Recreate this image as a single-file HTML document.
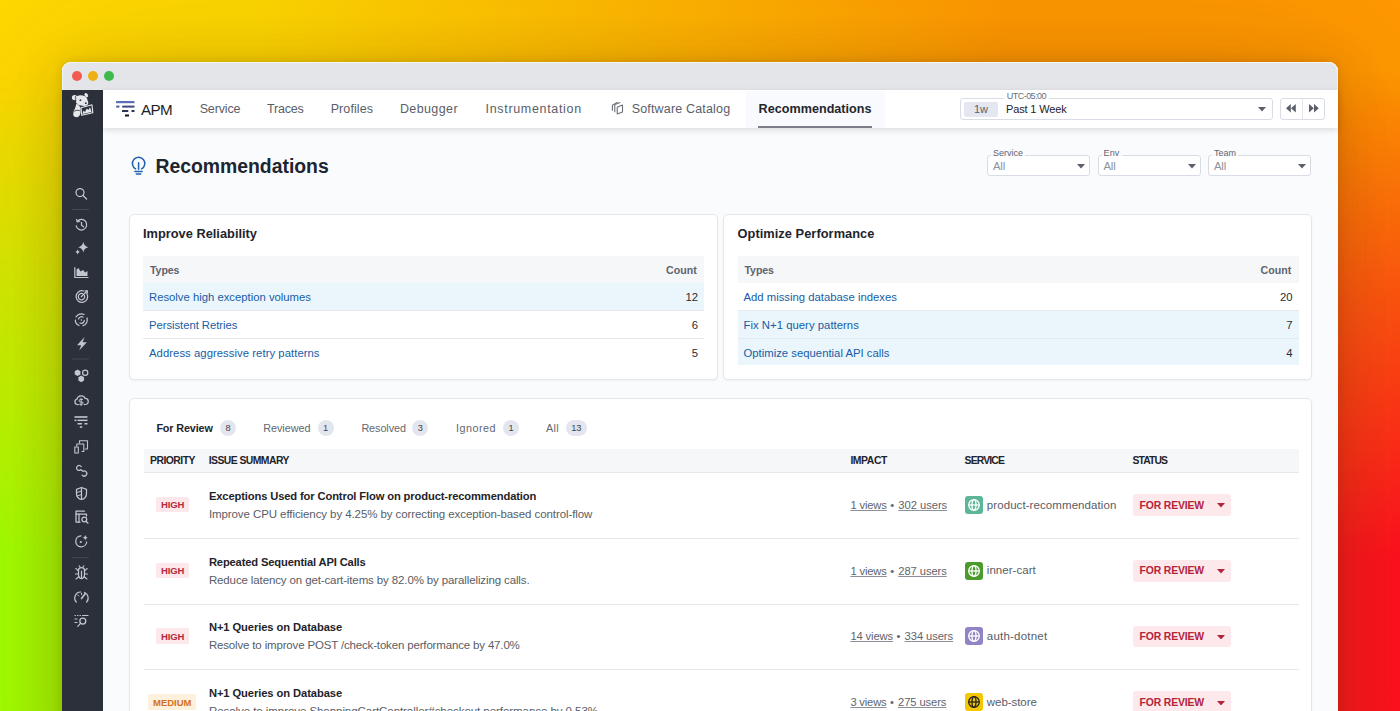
<!DOCTYPE html>
<html><head><meta charset="utf-8"><style>
html,body{margin:0;padding:0;width:1400px;height:711px;overflow:hidden;}
body{position:relative;font-family:"Liberation Sans", sans-serif;background:#ffb000;}
.bg{position:absolute;left:0;top:0;width:1400px;height:711px;background:linear-gradient(to right,#ffd800 18%,#ff9800 72%);}
.bg2{position:absolute;left:0;top:0;width:1400px;height:711px;background:linear-gradient(to right,#a2ff00,#ff101e);-webkit-mask-image:linear-gradient(to bottom,transparent 10%,rgba(0,0,0,.5) 42%,#000 78%);mask-image:linear-gradient(to bottom,transparent 10%,rgba(0,0,0,.5) 42%,#000 78%);}
.a{position:absolute;}
.t{position:absolute;white-space:nowrap;line-height:1;}
.c{text-align:center;}
u{text-decoration:underline;text-underline-offset:1px;text-decoration-thickness:1px;text-decoration-color:#8c9098;}
</style></head><body>
<div class="bg"></div><div class="bg2"></div>
<div class="a" style="left:62px;top:62px;width:1276px;height:800px;background:#fafbfd;border-radius:9px 9px 0 0;box-shadow:0 0 160px rgba(60,30,0,0.14),0 6px 50px rgba(70,40,0,0.18),0 0 10px rgba(60,40,0,0.14);"></div>
<div class="a" style="left:62px;top:62px;width:1276px;height:28px;background:#e4e5e9;border-radius:9px 9px 0 0;box-shadow:inset 0 1px 0 rgba(255,255,255,0.6),inset 1px 0 0 rgba(255,255,255,0.5),inset -1px 0 0 rgba(255,255,255,0.5);"></div>
<div class="a" style="left:71.5px;top:71px;width:10px;height:10px;background:#f25a52;border-radius:50%;"></div>
<div class="a" style="left:87.5px;top:71px;width:10px;height:10px;background:#f0b012;border-radius:50%;"></div>
<div class="a" style="left:103.5px;top:71px;width:10px;height:10px;background:#3fba4c;border-radius:50%;"></div>
<div class="a" style="left:62px;top:90px;width:41px;height:700px;background:#2c303a;"></div>
<div class="a" style="left:103px;top:90px;width:1235px;height:37.5px;background:#ffffff;box-shadow:0 2px 6px rgba(0,0,0,0.13);"></div>
<div class="a" style="left:746px;top:91px;width:139px;height:36.5px;background:#f9fafd;"></div>
<div class="a" style="left:758px;top:126.3px;width:114px;height:1.8px;background:#7b7e88;"></div>
<div class="t" style="left:141px;top:101.93px;font-size:15.2px;font-weight:400;color:#1d1f24;letter-spacing:-0.647px;">APM</div>
<div class="t" style="left:199.7px;top:102.82px;font-size:12.5px;font-weight:400;color:#5a5e68;letter-spacing:-0.155px;">Service</div>
<div class="t" style="left:267px;top:102.82px;font-size:12.5px;font-weight:400;color:#5a5e68;letter-spacing:-0.190px;">Traces</div>
<div class="t" style="left:330.7px;top:102.82px;font-size:12.5px;font-weight:400;color:#5a5e68;letter-spacing:0.090px;">Profiles</div>
<div class="t" style="left:399.9px;top:102.82px;font-size:12.5px;font-weight:400;color:#5a5e68;letter-spacing:0.400px;">Debugger</div>
<div class="t" style="left:485.6px;top:102.82px;font-size:12.5px;font-weight:400;color:#5a5e68;letter-spacing:0.669px;">Instrumentation</div>
<div class="t" style="left:631.7px;top:102.82px;font-size:12.5px;font-weight:400;color:#5a5e68;letter-spacing:0.169px;">Software Catalog</div>
<div class="t" style="left:758.6px;top:102.73px;font-size:12.6px;font-weight:700;color:#23262d;letter-spacing:0.018px;">Recommendations</div>
<svg class="a" style="left:114px;top:99px" width="22" height="20" viewBox="0 0 22 20">
<rect x="2" y="2" width="18.5" height="2.2" fill="#5b70b8"/>
<rect x="2.2" y="6.6" width="3.2" height="2" fill="#4a5a9a"/><rect x="8.2" y="6.6" width="12.3" height="2" fill="#3c4a80"/>
<rect x="8" y="11" width="6.3" height="2" fill="#2e3552"/><rect x="17.5" y="11" width="3" height="2" fill="#2e3552"/>
<rect x="11" y="15.5" width="4" height="2" fill="#15171c"/>
</svg>
<svg class="a" style="left:606px;top:96px" width="24" height="24" viewBox="0 0 24 24" fill="none" stroke="#6b7078" stroke-width="1.1" stroke-linejoin="round">
<path d="M11.2 11.2 L16.5 9.1 L16.5 15.9 L11.2 17.9 Z"/>
<path d="M8.8 16.2 L8.8 8.6 L14.3 6.6"/>
<path d="M6.4 14.8 L6.4 9.2 L11.6 6.1"/>
</svg>
<div class="a" style="left:960px;top:97.5px;width:312.5px;height:22.5px;border:1px solid #d9dce5;border-radius:3px;background:#fff;box-sizing:border-box;"></div>
<div class="a" style="left:1003.5px;top:92px;width:45px;height:8px;background:#fff;"></div>
<div class="t" style="left:1006.8px;top:92.08px;font-size:9.0px;font-weight:400;color:#6a6f7a;letter-spacing:-0.535px;">UTC-05:00</div>
<div class="a" style="left:964px;top:101.5px;width:33.5px;height:15px;background:#e4e7ef;border-radius:2px;"></div>
<div class="t" style="left:974px;top:103.59px;font-size:11.0px;font-weight:400;color:#5a5f6a;letter-spacing:-0.031px;">1w</div>
<div class="t" style="left:1006px;top:103.59px;font-size:11.0px;font-weight:400;color:#1f2228;letter-spacing:-0.142px;">Past 1 Week</div>
<svg class="a" style="left:1258px;top:107.3px" width="8" height="4.5" viewBox="0 0 8 4.5"><path d="M0 0 L8 0 L4 4.5Z" fill="#5a5f6a"/></svg>
<div class="a" style="left:1279.5px;top:97.5px;width:45px;height:22.5px;border:1px solid #d9dce5;border-radius:3px;background:#fff;box-sizing:border-box;"></div>
<div class="a" style="left:1302px;top:98px;width:1px;height:21.5px;background:#e1e4ec;"></div>
<svg class="a" style="left:1285.5px;top:104.3px" width="10" height="8.5" viewBox="0 0 10 8.5"><path d="M4.8 0 L0 4.25 L4.8 8.5Z M9.8 0 L5 4.25 L9.8 8.5Z" fill="#5a5f6a"/></svg>
<svg class="a" style="left:1308.5px;top:104.3px" width="10" height="8.5" viewBox="0 0 10 8.5"><path d="M0 0 L4.8 4.25 L0 8.5Z M5 0 L9.8 4.25 L5 8.5Z" fill="#5a5f6a"/></svg>
<div class="t" style="left:155.4px;top:156.58px;font-size:19.4px;font-weight:700;color:#1c2530;letter-spacing:-0.011px;">Recommendations</div>
<svg class="a" style="left:131px;top:156px" width="16" height="20" viewBox="0 0 16 20" fill="none" stroke="#1f5fae" stroke-width="1.5" stroke-linecap="round">
<path d="M4.6 12.9 A6.2 6.2 0 1 1 10.6 12.9"/>
<path d="M7.6 6.8 L7.6 13.2"/><path d="M3.9 15.6 L11.1 15.6"/><path d="M5.4 17.9 L9.7 17.9"/>
</svg>
<div class="a" style="left:987px;top:154.5px;width:103px;height:21.5px;border:1px solid #d9dce5;border-radius:3px;background:#fff;box-sizing:border-box;"></div>
<div class="a" style="left:991px;top:150px;width:34px;height:6px;background:#fafbfd;"></div>
<div class="t" style="left:993px;top:148.78px;font-size:9.0px;font-weight:400;color:#5f6470;letter-spacing:-0.002px;">Service</div>
<div class="t" style="left:993px;top:160.83px;font-size:11.3px;font-weight:400;color:#8d929c;letter-spacing:-0.186px;">All</div>
<svg class="a" style="left:1077px;top:164px" width="8" height="4.5" viewBox="0 0 8 4.5"><path d="M0 0 L8 0 L4 4.5Z" fill="#5a5f6a"/></svg>
<div class="a" style="left:1097.5px;top:154.5px;width:103px;height:21.5px;border:1px solid #d9dce5;border-radius:3px;background:#fff;box-sizing:border-box;"></div>
<div class="a" style="left:1101.5px;top:150px;width:20px;height:6px;background:#fafbfd;"></div>
<div class="t" style="left:1103.5px;top:148.78px;font-size:9.0px;font-weight:400;color:#5f6470;letter-spacing:0.164px;">Env</div>
<div class="t" style="left:1103.5px;top:160.83px;font-size:11.3px;font-weight:400;color:#8d929c;letter-spacing:-0.186px;">All</div>
<svg class="a" style="left:1187.5px;top:164px" width="8" height="4.5" viewBox="0 0 8 4.5"><path d="M0 0 L8 0 L4 4.5Z" fill="#5a5f6a"/></svg>
<div class="a" style="left:1208px;top:154.5px;width:103px;height:21.5px;border:1px solid #d9dce5;border-radius:3px;background:#fff;box-sizing:border-box;"></div>
<div class="a" style="left:1212px;top:150px;width:26px;height:6px;background:#fafbfd;"></div>
<div class="t" style="left:1214px;top:148.78px;font-size:9.0px;font-weight:400;color:#5f6470;letter-spacing:-0.002px;">Team</div>
<div class="t" style="left:1214px;top:160.83px;font-size:11.3px;font-weight:400;color:#8d929c;letter-spacing:-0.186px;">All</div>
<svg class="a" style="left:1298px;top:164px" width="8" height="4.5" viewBox="0 0 8 4.5"><path d="M0 0 L8 0 L4 4.5Z" fill="#5a5f6a"/></svg>
<div class="a" style="left:128.5px;top:213.5px;width:589.5px;height:166.5px;background:#fff;border:1px solid #e6e7ec;border-radius:5px;box-sizing:border-box;box-shadow:0 1px 2px rgba(0,0,0,0.05);"></div>
<div class="a" style="left:722.5px;top:213.5px;width:589px;height:166.5px;background:#fff;border:1px solid #e6e7ec;border-radius:5px;box-sizing:border-box;box-shadow:0 1px 2px rgba(0,0,0,0.05);"></div>
<div class="a" style="left:128.5px;top:397.5px;width:1183px;height:400px;background:#fff;border:1px solid #e6e7ec;border-radius:5px;box-sizing:border-box;box-shadow:0 1px 2px rgba(0,0,0,0.05);"></div>
<div class="t" style="left:143px;top:227.86px;font-size:12.8px;font-weight:700;color:#1f232a;letter-spacing:0.010px;">Improve Reliability</div>
<div class="a" style="left:143px;top:256px;width:561px;height:27px;background:#f6f7f9;"></div>
<div class="t" style="left:150px;top:265.03px;font-size:10.6px;font-weight:700;color:#5f646d;letter-spacing:-0.090px;">Types</div>
<div class="t" style="right:703px;top:265.03px;font-size:10.6px;font-weight:700;color:#5f646d;letter-spacing:0.1px;">Count</div>
<div class="a" style="left:143px;top:283px;width:561px;height:27.5px;background:#eaf6fc;"></div>
<div class="t" style="left:149px;top:292.23px;font-size:11.3px;font-weight:400;color:#175da6;letter-spacing:-0.002px;">Resolve high exception volumes</div>
<div class="t" style="right:702px;top:292.23px;font-size:11.3px;font-weight:400;color:#2a2d33;">12</div>
<div class="a" style="left:143px;top:310.0px;width:561px;height:1px;background:#e6e8ee;"></div>
<div class="t" style="left:149px;top:319.73px;font-size:11.3px;font-weight:400;color:#175da6;letter-spacing:-0.049px;">Persistent Retries</div>
<div class="t" style="right:702px;top:319.73px;font-size:11.3px;font-weight:400;color:#2a2d33;">6</div>
<div class="a" style="left:143px;top:338.0px;width:561px;height:1px;background:#e6e8ee;"></div>
<div class="t" style="left:149px;top:347.73px;font-size:11.3px;font-weight:400;color:#175da6;letter-spacing:0.050px;">Address aggressive retry patterns</div>
<div class="t" style="right:702px;top:347.73px;font-size:11.3px;font-weight:400;color:#2a2d33;">5</div>
<div class="t" style="left:737.5px;top:227.86px;font-size:12.8px;font-weight:700;color:#1f232a;letter-spacing:0.057px;">Optimize Performance</div>
<div class="a" style="left:737.5px;top:256px;width:561.0px;height:27px;background:#f6f7f9;"></div>
<div class="t" style="left:744.5px;top:265.03px;font-size:10.6px;font-weight:700;color:#5f646d;letter-spacing:-0.090px;">Types</div>
<div class="t" style="right:108.5px;top:265.03px;font-size:10.6px;font-weight:700;color:#5f646d;letter-spacing:0.1px;">Count</div>
<div class="t" style="left:743.5px;top:292.23px;font-size:11.3px;font-weight:400;color:#175da6;letter-spacing:0.004px;">Add missing database indexes</div>
<div class="t" style="right:107.5px;top:292.23px;font-size:11.3px;font-weight:400;color:#2a2d33;">20</div>
<div class="a" style="left:737.5px;top:310.5px;width:561.0px;height:27.5px;background:#eaf6fc;"></div>
<div class="a" style="left:737.5px;top:310.0px;width:561.0px;height:1px;background:#e6e8ee;"></div>
<div class="t" style="left:743.5px;top:319.73px;font-size:11.3px;font-weight:400;color:#175da6;letter-spacing:0.035px;">Fix N+1 query patterns</div>
<div class="t" style="right:107.5px;top:319.73px;font-size:11.3px;font-weight:400;color:#2a2d33;">7</div>
<div class="a" style="left:737.5px;top:338.5px;width:561.0px;height:26.5px;background:#eaf6fc;"></div>
<div class="a" style="left:737.5px;top:338.0px;width:561.0px;height:1px;background:#e6e8ee;"></div>
<div class="t" style="left:743.5px;top:347.73px;font-size:11.3px;font-weight:400;color:#175da6;letter-spacing:0.010px;">Optimize sequential API calls</div>
<div class="t" style="right:107.5px;top:347.73px;font-size:11.3px;font-weight:400;color:#2a2d33;">4</div>
<div class="t" style="left:156.4px;top:422.76px;font-size:10.8px;font-weight:700;color:#1f232a;letter-spacing:-0.132px;">For Review</div>
<div class="a" style="left:220px;top:419.5px;width:16px;height:16px;background:#e4e6ef;border-radius:8px;"></div>
<div class="a c" style="left:220px;top:419.5px;width:16px;height:16px;line-height:16.5px;font-size:9.3px;color:#3e434c;">8</div>
<div class="t" style="left:263.3px;top:422.76px;font-size:10.8px;font-weight:400;color:#62676f;letter-spacing:-0.041px;">Reviewed</div>
<div class="a" style="left:317.5px;top:419.5px;width:16px;height:16px;background:#e4e6ef;border-radius:8px;"></div>
<div class="a c" style="left:317.5px;top:419.5px;width:16px;height:16px;line-height:16.5px;font-size:9.3px;color:#3e434c;">1</div>
<div class="t" style="left:361.4px;top:422.76px;font-size:10.8px;font-weight:400;color:#62676f;letter-spacing:-0.066px;">Resolved</div>
<div class="a" style="left:412.4px;top:419.5px;width:16px;height:16px;background:#e4e6ef;border-radius:8px;"></div>
<div class="a c" style="left:412.4px;top:419.5px;width:16px;height:16px;line-height:16.5px;font-size:9.3px;color:#3e434c;">3</div>
<div class="t" style="left:456px;top:422.76px;font-size:10.8px;font-weight:400;color:#62676f;letter-spacing:0.481px;">Ignored</div>
<div class="a" style="left:503px;top:419.5px;width:16px;height:16px;background:#e4e6ef;border-radius:8px;"></div>
<div class="a c" style="left:503px;top:419.5px;width:16px;height:16px;line-height:16.5px;font-size:9.3px;color:#3e434c;">1</div>
<div class="t" style="left:546px;top:422.76px;font-size:10.8px;font-weight:400;color:#62676f;letter-spacing:0.266px;">All</div>
<div class="a" style="left:565.6px;top:419.5px;width:21.5px;height:16px;background:#e4e6ef;border-radius:8px;"></div>
<div class="a c" style="left:565.6px;top:419.5px;width:21.5px;height:16px;line-height:16.5px;font-size:9.3px;color:#3e434c;">13</div>
<div class="a" style="left:143.5px;top:449px;width:1155px;height:23.5px;background:#f6f7f9;border-bottom:1px solid #e6e8ee;box-sizing:border-box;"></div>
<div class="t" style="left:150.1px;top:456.20px;font-size:10.4px;font-weight:700;color:#1f232a;letter-spacing:-0.540px;">PRIORITY</div>
<div class="t" style="left:208.8px;top:456.20px;font-size:10.4px;font-weight:700;color:#1f232a;letter-spacing:-0.565px;">ISSUE SUMMARY</div>
<div class="t" style="left:850.4px;top:456.20px;font-size:10.4px;font-weight:700;color:#1f232a;letter-spacing:-0.415px;">IMPACT</div>
<div class="t" style="left:964.6px;top:456.20px;font-size:10.4px;font-weight:700;color:#1f232a;letter-spacing:-0.867px;">SERVICE</div>
<div class="t" style="left:1132.5px;top:456.20px;font-size:10.4px;font-weight:700;color:#1f232a;letter-spacing:-0.926px;">STATUS</div>
<div class="a" style="left:156.4px;top:496.8px;width:32.5px;height:15.5px;background:#fce7ea;border-radius:2px;"></div>
<div class="t" style="left:161px;top:500.36px;font-size:9.5px;font-weight:700;color:#b52a3d;letter-spacing:-0.138px;">HIGH</div>
<div class="t" style="left:208.9px;top:490.82px;font-size:11.2px;font-weight:700;color:#1f232a;letter-spacing:-0.133px;">Exceptions Used for Control Flow on product-recommendation</div>
<div class="t" style="left:208.9px;top:508.97px;font-size:11.5px;font-weight:400;color:#585d66;letter-spacing:-0.085px;">Improve CPU efficiency by 4.25% by correcting exception-based control-flow</div>
<div class="t" style="left:850.4px;top:499.92px;font-size:11.2px;font-weight:400;color:#5f646d;letter-spacing:-0.135px;"><u>1 views</u></div>
<div class="t" style="left:890.3px;top:499.92px;font-size:11.2px;font-weight:400;color:#5f646d;">•</div>
<div class="t" style="left:898.3px;top:499.92px;font-size:11.2px;font-weight:400;color:#5f646d;letter-spacing:-0.032px;"><u>302 users</u></div>
<div class="a" style="left:964.6px;top:495.8px;width:18px;height:18px;background:#5cb697;border-radius:3px;"></div>
<svg class="a" style="left:966.6px;top:497.8px" width="14" height="14" viewBox="0 0 14 14" fill="none" stroke="#fff" stroke-width="1.3">
<circle cx="7" cy="7" r="5.3"/><ellipse cx="7" cy="7" rx="2" ry="5.3"/><path d="M1.8 7 L12.2 7"/></svg>
<div class="t" style="left:986.8px;top:499.67px;font-size:11.5px;font-weight:400;color:#585d66;letter-spacing:0.080px;">product-recommendation</div>
<div class="a" style="left:1132.5px;top:494.1px;width:98.5px;height:21.7px;background:#fde8eb;border-radius:3px;"></div>
<div class="t" style="left:1139.6px;top:500.60px;font-size:10.4px;font-weight:700;color:#b3243b;letter-spacing:-0.147px;">FOR REVIEW</div>
<svg class="a" style="left:1216.5px;top:503.3px" width="8" height="4.5" viewBox="0 0 8 4.5"><path d="M0 0 L8 0 L4 4.5Z" fill="#b3243b"/></svg>
<div class="a" style="left:144px;top:537.75px;width:1154.5px;height:1px;background:#e6e8ee;"></div>
<div class="a" style="left:156.4px;top:562.55px;width:32.5px;height:15.5px;background:#fce7ea;border-radius:2px;"></div>
<div class="t" style="left:161px;top:566.11px;font-size:9.5px;font-weight:700;color:#b52a3d;letter-spacing:-0.138px;">HIGH</div>
<div class="t" style="left:208.9px;top:556.57px;font-size:11.2px;font-weight:700;color:#1f232a;letter-spacing:-0.156px;">Repeated Sequential API Calls</div>
<div class="t" style="left:208.9px;top:574.72px;font-size:11.5px;font-weight:400;color:#585d66;letter-spacing:-0.122px;">Reduce latency on get-cart-items by 82.0% by parallelizing calls.</div>
<div class="t" style="left:850.4px;top:565.67px;font-size:11.2px;font-weight:400;color:#5f646d;letter-spacing:-0.135px;"><u>1 views</u></div>
<div class="t" style="left:890.3px;top:565.67px;font-size:11.2px;font-weight:400;color:#5f646d;">•</div>
<div class="t" style="left:898.3px;top:565.67px;font-size:11.2px;font-weight:400;color:#5f646d;letter-spacing:-0.076px;"><u>287 users</u></div>
<div class="a" style="left:964.6px;top:561.55px;width:18px;height:18px;background:#4d9a2c;border-radius:3px;"></div>
<svg class="a" style="left:966.6px;top:563.55px" width="14" height="14" viewBox="0 0 14 14" fill="none" stroke="#fff" stroke-width="1.3">
<circle cx="7" cy="7" r="5.3"/><ellipse cx="7" cy="7" rx="2" ry="5.3"/><path d="M1.8 7 L12.2 7"/></svg>
<div class="t" style="left:986.8px;top:565.42px;font-size:11.5px;font-weight:400;color:#585d66;letter-spacing:0.043px;">inner-cart</div>
<div class="a" style="left:1132.5px;top:559.8499999999999px;width:98.5px;height:21.7px;background:#fde8eb;border-radius:3px;"></div>
<div class="t" style="left:1139.6px;top:566.35px;font-size:10.4px;font-weight:700;color:#b3243b;letter-spacing:-0.147px;">FOR REVIEW</div>
<svg class="a" style="left:1216.5px;top:569.05px" width="8" height="4.5" viewBox="0 0 8 4.5"><path d="M0 0 L8 0 L4 4.5Z" fill="#b3243b"/></svg>
<div class="a" style="left:144px;top:603.5px;width:1154.5px;height:1px;background:#e6e8ee;"></div>
<div class="a" style="left:156.4px;top:628.3px;width:32.5px;height:15.5px;background:#fce7ea;border-radius:2px;"></div>
<div class="t" style="left:161px;top:631.86px;font-size:9.5px;font-weight:700;color:#b52a3d;letter-spacing:-0.138px;">HIGH</div>
<div class="t" style="left:208.9px;top:622.32px;font-size:11.2px;font-weight:700;color:#1f232a;letter-spacing:-0.091px;">N+1 Queries on Database</div>
<div class="t" style="left:208.9px;top:640.47px;font-size:11.5px;font-weight:400;color:#585d66;letter-spacing:-0.162px;">Resolve to improve POST /check-token performance by 47.0%</div>
<div class="t" style="left:850.4px;top:631.42px;font-size:11.2px;font-weight:400;color:#5f646d;letter-spacing:-0.109px;"><u>14 views</u></div>
<div class="t" style="left:896.6px;top:631.42px;font-size:11.2px;font-weight:400;color:#5f646d;">•</div>
<div class="t" style="left:904.6px;top:631.42px;font-size:11.2px;font-weight:400;color:#5f646d;letter-spacing:-0.076px;"><u>334 users</u></div>
<div class="a" style="left:964.6px;top:627.3px;width:18px;height:18px;background:#9283c4;border-radius:3px;"></div>
<svg class="a" style="left:966.6px;top:629.3px" width="14" height="14" viewBox="0 0 14 14" fill="none" stroke="#fff" stroke-width="1.3">
<circle cx="7" cy="7" r="5.3"/><ellipse cx="7" cy="7" rx="2" ry="5.3"/><path d="M1.8 7 L12.2 7"/></svg>
<div class="t" style="left:986.8px;top:631.17px;font-size:11.5px;font-weight:400;color:#585d66;letter-spacing:0.210px;">auth-dotnet</div>
<div class="a" style="left:1132.5px;top:625.5999999999999px;width:98.5px;height:21.7px;background:#fde8eb;border-radius:3px;"></div>
<div class="t" style="left:1139.6px;top:632.10px;font-size:10.4px;font-weight:700;color:#b3243b;letter-spacing:-0.147px;">FOR REVIEW</div>
<svg class="a" style="left:1216.5px;top:634.8px" width="8" height="4.5" viewBox="0 0 8 4.5"><path d="M0 0 L8 0 L4 4.5Z" fill="#b3243b"/></svg>
<div class="a" style="left:144px;top:669.25px;width:1154.5px;height:1px;background:#e6e8ee;"></div>
<div class="a" style="left:148.2px;top:694.05px;width:48px;height:15.5px;background:#fdf0dd;border-radius:2px;"></div>
<div class="t" style="left:153px;top:697.61px;font-size:9.5px;font-weight:700;color:#d5701b;letter-spacing:-0.004px;">MEDIUM</div>
<div class="t" style="left:208.9px;top:688.07px;font-size:11.2px;font-weight:700;color:#1f232a;letter-spacing:-0.091px;">N+1 Queries on Database</div>
<div class="t" style="left:208.9px;top:706.22px;font-size:11.5px;font-weight:400;color:#585d66;letter-spacing:-0.058px;">Resolve to improve ShoppingCartController#checkout performance by 0.53%</div>
<div class="t" style="left:850.4px;top:697.17px;font-size:11.2px;font-weight:400;color:#5f646d;letter-spacing:-0.178px;"><u>3 views</u></div>
<div class="t" style="left:890.0px;top:697.17px;font-size:11.2px;font-weight:400;color:#5f646d;">•</div>
<div class="t" style="left:898.0px;top:697.17px;font-size:11.2px;font-weight:400;color:#5f646d;letter-spacing:-0.087px;"><u>275 users</u></div>
<div class="a" style="left:964.6px;top:693.05px;width:18px;height:18px;background:#f3c800;border-radius:3px;"></div>
<svg class="a" style="left:966.6px;top:695.05px" width="14" height="14" viewBox="0 0 14 14" fill="none" stroke="#222" stroke-width="1.3">
<circle cx="7" cy="7" r="5.3"/><ellipse cx="7" cy="7" rx="2" ry="5.3"/><path d="M1.8 7 L12.2 7"/></svg>
<div class="t" style="left:986.8px;top:696.92px;font-size:11.5px;font-weight:400;color:#585d66;letter-spacing:-0.055px;">web-store</div>
<div class="a" style="left:1132.5px;top:691.3499999999999px;width:98.5px;height:21.7px;background:#fde8eb;border-radius:3px;"></div>
<div class="t" style="left:1139.6px;top:697.85px;font-size:10.4px;font-weight:700;color:#b3243b;letter-spacing:-0.147px;">FOR REVIEW</div>
<svg class="a" style="left:1216.5px;top:700.55px" width="8" height="4.5" viewBox="0 0 8 4.5"><path d="M0 0 L8 0 L4 4.5Z" fill="#b3243b"/></svg>
<svg class="a" style="left:0;top:0" width="1400" height="711" viewBox="0 0 1400 711" fill="none" stroke="#c3c6cd" stroke-width="1.25" stroke-linecap="round" stroke-linejoin="round">
<g stroke="none" fill="#e6e7eb">
<path d="M76.5 96.5 Q80 94.2 84.5 96 Q87.5 97.5 87.8 101 Q89.2 103 87.5 105 Q85 106.5 81 105.5 Q77.5 105 76 102.5 Z"/>
<circle cx="74.6" cy="97.6" r="2.7"/>
<ellipse cx="86.3" cy="95.2" rx="1.6" ry="2.3" transform="rotate(-35 86.3 95.2)"/>
<path d="M76.5 103.5 Q79.5 105.5 80.5 108 L80.5 113 Q80 116.5 77 117.2 Q73.5 117.3 73.2 114.5 Q73 111 75 108.5 Z"/>
</g>
<path d="M75.2 100.2 Q76.3 98.5 75.5 96.5" stroke="#2c303a" stroke-width="0.8"/>
<path d="M74.5 111 Q77 109.5 79.5 110.5" stroke="#2c303a" stroke-width="0.8"/>
<g stroke="none" fill="#2c303a"><circle cx="80.4" cy="100.2" r="0.9"/><circle cx="85.8" cy="103.2" r="0.9"/></g>
<path d="M81 107.8 L92 104.8 L92.8 112.8 L81.8 115.3 Z" fill="#2c303a" stroke="#e6e7eb" stroke-width="1.1"/>
<path d="M82.4 114 L83.6 110.6 L85 112 L86.8 108.6 L88.4 110 L90 107.2 L91.6 112 Z" fill="#e6e7eb" stroke="none"/>
<circle cx="80" cy="192.5" r="4"/><path d="M83 195.5 L86.5 199"/>
<path d="M72.5 209.5 L88.5 209.5" stroke="#434854" stroke-width="1"/>
<path d="M77.3 221.3 A5.3 5.3 0 1 1 76.2 225.8"/><path d="M76.6 219.5 L77.3 221.8 L79.6 221.2"/><path d="M81.5 222.3 L81.5 225.3 L83.6 226.8"/>
<path d="M83.3 241.8 Q84 246.3 88.3 247.2 Q84 248.1 83.3 252.6 Q82.6 248.1 78.3 247.2 Q82.6 246.3 83.3 241.8Z" fill="#c3c6cd" stroke="none"/>
<path d="M77.6 249.6 Q78 251.6 79.8 252 Q78 252.4 77.6 254.4 Q77.2 252.4 75.4 252 Q77.2 251.6 77.6 249.6Z" fill="#c3c6cd" stroke="none"/>
<path d="M74.8 267.5 L74.8 277.5 L88 277.5" stroke-width="1.2"/>
<path d="M76.5 276 L76.5 269.5 L78.5 268 L80.5 271.5 L83 270 L85.3 272.5 L87.5 271 L87.5 276 Z" fill="#c3c6cd" stroke="none"/>
<path d="M86.8 293.5 A5.8 5.8 0 1 1 83.5 291"/><path d="M84.5 295.5 A3.2 3.2 0 1 1 82.5 293.6"/><path d="M81.3 296.7 L87 291"/><path d="M85 290.8 L87.3 290.8 L87.3 293"/>
<path d="M76 317 A6 6 0 0 1 84 314.5"/><path d="M87 318 A6 6 0 0 1 83 325.7"/><path d="M79 325.5 A6 6 0 0 1 75.3 320"/>
<path d="M78.5 319 A3 3 0 0 1 83 317.2"/><path d="M84.3 320.5 A3 3 0 0 1 80 323"/><circle cx="81.3" cy="320" r="0.8" fill="#c6c9d0" stroke="none"/>
<path d="M84.6 337 L77 345.3 L81.2 345.3 L79.2 350.6 L86.8 342.2 L82.6 342.2 Z" fill="#c3c6cd" stroke="none"/>
<path d="M72.5 359 L88.5 359" stroke="#434854" stroke-width="1"/>
<path d="M77.60 376.10 L74.74 374.45 L74.74 371.15 L77.60 369.50 L80.46 371.15 L80.46 374.45Z" fill="#c3c6cd" stroke="none"/>
<path d="M81.20 382.20 L78.34 380.55 L78.34 377.25 L81.20 375.60 L84.06 377.25 L84.06 380.55Z" fill="#c3c6cd" stroke="none"/>
<circle cx="85.2" cy="372.8" r="2.6" stroke-width="1.2"/>
<path d="M78.3 404.5 L77.3 404.5 A2.7 2.7 0 0 1 77 399.2 A4.3 4.3 0 0 1 85.2 398.5 A3 3 0 0 1 85.3 404.5 L84.3 404.5"/>
<path d="M82.5 399.5 L80.3 399.5 A1.2 1.2 0 0 0 80.3 401.9 L81.9 401.9 A1.2 1.2 0 0 1 81.9 404.3 L79.7 404.3 M81.1 398.3 L81.1 405.6" stroke-width="1"/>
<g stroke="none" fill="#c3c6cd"><rect x="74.5" y="416.2" width="13" height="1.6"/><rect x="74.5" y="419.6" width="2" height="1.5"/><rect x="77.5" y="419.6" width="10" height="1.5"/><rect x="77.5" y="423" width="4.5" height="1.5"/><rect x="84.5" y="423" width="3" height="1.5"/><rect x="79.8" y="426.3" width="2.5" height="1.5"/></g>
<path d="M79.5 443 L79.5 440.8 L87.5 440.8 L87.5 449 L85.3 449" stroke-width="1.1"/><path d="M76.8 446 L76.8 444 L83.8 444 L83.8 451.5 L82 451.5" stroke-width="1.1"/><rect x="74.8" y="447" width="3.5" height="6" stroke-width="1.1"/>
<path d="M80.8 469.8 A2.5 2.5 0 1 1 81.2 466.6"/><path d="M80.8 469.8 L83 471.2"/><path d="M83 471.2 A2.6 2.6 0 1 1 82.2 475.2"/>
<path d="M81.5 487.5 L86.5 489.3 L86.5 493 A5.5 6 0 0 1 81.5 499.5 A5.5 6 0 0 1 76.5 493 L76.5 489.3 Z"/><path d="M81.5 488 L81.5 499"/><path d="M77 492.5 L81.5 491 M77.3 496 L81.5 494.5" stroke-width="1"/>
<path d="M84.5 511 L76 511 L76 522 L80 522"/><path d="M76 514 L86.5 514 L86.5 516"/><path d="M79 514 L79 522"/><circle cx="84.3" cy="519.5" r="2.4"/><path d="M86 521.2 L88 523.2"/>
<path d="M86.7 542 A5.5 5.5 0 1 1 81 535.8"/>
<path d="M85.3 535 Q85.6 537.3 87.8 537.7 Q85.6 538.1 85.3 540.4 Q85 538.1 82.8 537.7 Q85 537.3 85.3 535Z" fill="#c3c6cd" stroke="none"/><circle cx="80.8" cy="542" r="1.1" fill="#c3c6cd" stroke="none"/>
<path d="M72.5 557.6 L88.5 557.6" stroke="#434854" stroke-width="1"/>
<path d="M78.5 570 A3 2.5 0 0 1 84.5 570 L84.5 574.5 A3 4 0 0 1 78.5 574.5 Z"/><path d="M81.5 571 L81.5 578.5"/><path d="M75.8 568.5 L78.5 570.8 M87.2 568.5 L84.5 570.8 M75.5 574 L78.5 574 M87.5 574 L84.5 574 M76 579 L78.8 576.7 M87 579 L84.2 576.7 M80 567 L79.2 565.8 M83 567 L83.8 565.8" stroke-width="1.1"/>
<g transform="translate(0 1)"><path d="M76.3 601 A6 6 0 0 1 80.5 591"/><path d="M84.5 591.5 A6 6 0 0 1 86.7 601"/><path d="M81.5 597.5 L85.3 592.5" stroke-width="1.6"/><path d="M77.8 594 L78.8 595 M81.5 592.2 L81.5 593.5" stroke-width="1"/></g>
<g transform="translate(0 2)"><path d="M75 613.5 L75.5 613.5 M77.5 613.5 L78 613.5 M80 613.5 L80.5 613.5 M82.5 613.5 L88 613.5 M75 617 L77 617 M75 620.5 L77 620.5" stroke-width="1.2"/><circle cx="82.8" cy="619" r="3"/><path d="M80.7 621.2 L77.8 624.4"/></g>
</svg>
</body></html>
